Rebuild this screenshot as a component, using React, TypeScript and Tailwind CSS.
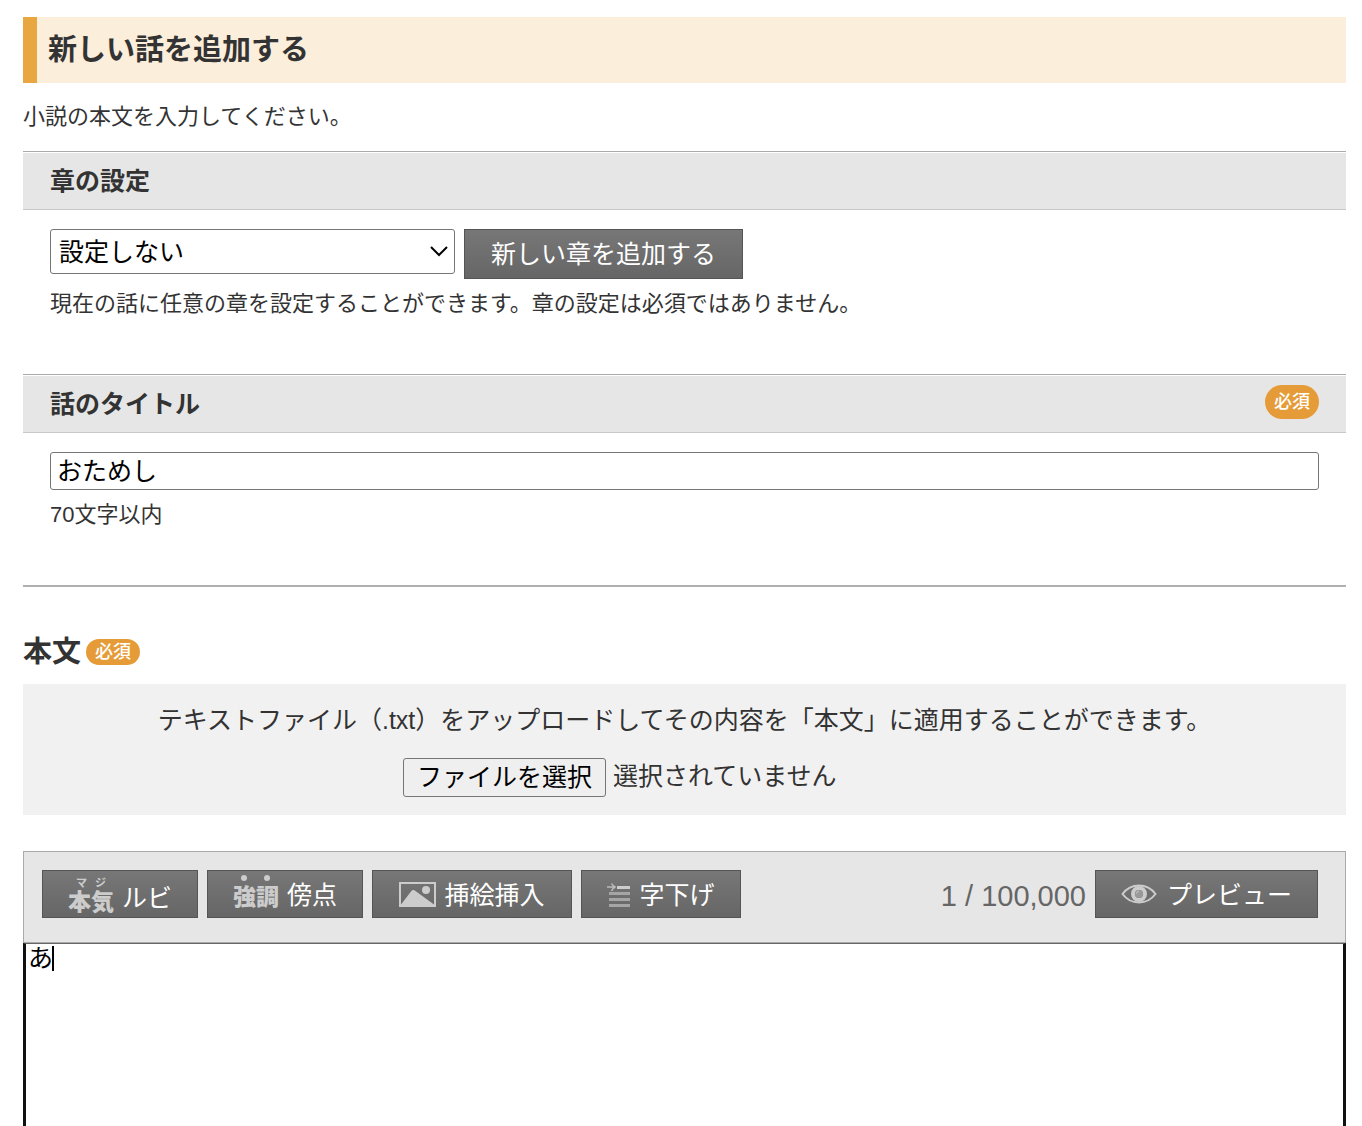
import React, { useState } from "react";

function SectionHeading({ htmlFor, children, required }: { htmlFor: string; children: React.ReactNode; required?: boolean }) {
  return (
    <div className="border-t border-[#aaaaaa] pt-px">
      <h2 className="flex h-[57px] items-center justify-between border-b border-[#c8c8c8] bg-[#e6e6e6] px-[27px] text-[25px] leading-9 font-bold">
        <label htmlFor={htmlFor}>{children}</label>
        {required && (
          <span className="mb-1 rounded-full bg-[#e59c38] px-[9px] text-lg leading-[34px] font-medium text-white">必須</span>
        )}
      </h2>
    </div>
  );
}

function ToolButton({ children, className = "" }: { children: React.ReactNode; className?: string }) {
  return (
    <button
      type="button"
      className={`flex h-12 shrink-0 items-center justify-center border border-[#555555] bg-linear-to-b from-[#777777] to-[#666666] text-[25px] leading-9 whitespace-nowrap text-white ${className}`}
    >
      {children}
    </button>
  );
}

function PictureIcon() {
  return (
    <svg className="mt-px h-[25px] w-[37px]" viewBox="0 0 37 25" fill="none" aria-hidden="true">
      <rect x="1" y="1" width="35" height="23" stroke="#cccccc" strokeWidth="2" />
      <path d="M2 22.500 12 9.500Q14 7 16.500 9L35 22.500V24H2z" fill="#cccccc" />
      <circle cx="27" cy="8" r="4" fill="#cccccc" />
    </svg>
  );
}

function IndentIcon() {
  return (
    <svg className="mt-px h-6 w-6" viewBox="0 0 24 24" fill="none" aria-hidden="true">
      <path d="M0 4h7M4.500 0.500c1 2 2 3 4 3.500-2 .5-3 1.500-4 4" stroke="#bbbbbb" strokeWidth="1.500" />
      <path d="M10 4.500h13" stroke="#cccccc" strokeWidth="3" />
      <path d="M2 10.500h21M2 16.500h21M2 22.500h21" stroke="#a5a5a5" strokeWidth="3" />
    </svg>
  );
}

function EyeIcon() {
  return (
    <svg className="h-5 w-9" viewBox="0 0 36 20" fill="none" aria-hidden="true">
      <path d="M1.500 10C6 4 11.500 1.500 18 1.500S30 4 34.500 10C30 16 24.500 18.500 18 18.500S6 16 1.500 10z" stroke="#cccccc" strokeWidth="2" />
      <circle cx="18" cy="10" r="6" stroke="#cccccc" strokeWidth="4" />
      <circle cx="18" cy="10" r="4" fill="#999999" />
      <path d="M15.500 9.500a3 3 0 0 1 2.500-2.500" stroke="#cccccc" strokeWidth="1" />
    </svg>
  );
}

export default function App() {
  const [title, setTitle] = useState("おためし");
  const [body, setBody] = useState("あ");

  return (
    <main className="flex h-screen flex-col overflow-hidden bg-white pt-[17px] pr-4 pl-[23px] font-['Liberation_Sans','Noto_Sans_CJK_JP',sans-serif] text-[#333333]">
      <h1 className="h-[66px] shrink-0 border-l-14 border-[#e9a742] bg-[#fbeedb] pl-[11px] text-[29px] leading-[66px] font-bold">
        新しい話を追加する
      </h1>
      <p className="mt-4 text-[22px] leading-9">小説の本文を入力してください。</p>

      <section className="mt-4">
        <SectionHeading htmlFor="chapter">章の設定</SectionHeading>
        <div className="px-[27px] pt-[19px]">
          <div className="flex items-start gap-[9px]">
            <div className="relative w-[405px]">
              <select
                id="chapter"
                className="block h-[45px] w-full appearance-none rounded-[3px] border border-[#767676] bg-white px-2 text-[25px] leading-9 text-black"
              >
                <option>設定しない</option>
              </select>
              <svg className="pointer-events-none absolute top-4 right-1.5 h-3 w-5" viewBox="0 0 20 12" fill="none" aria-hidden="true">
                <path d="m2 2 8 8 8-8" stroke="#000000" strokeWidth="2" />
              </svg>
            </div>
            <button
              type="button"
              className="h-[50px] border border-[#555555] bg-linear-to-b from-[#777777] to-[#666666] px-[26px] text-[25px] leading-9 text-white"
            >
              新しい章を追加する
            </button>
          </div>
          <p className="mt-[7px] text-[22px] leading-9">現在の話に任意の章を設定することができます。章の設定は必須ではありません。</p>
        </div>
      </section>

      <section className="mt-[52px] border-b-2 border-[#b0b0b0] pb-[52px]">
        <SectionHeading htmlFor="title" required>
          話のタイトル
        </SectionHeading>
        <div className="px-[27px] pt-[19px]">
          <input
            id="title"
            type="text"
            value={title}
            onChange={(e) => setTitle(e.target.value)}
            className="block h-[38px] w-full rounded-[3px] border border-[#767676] bg-white px-1.5 pb-1 text-[25px] text-black"
          />
          <p className="mt-[7px] text-[22px] leading-9">70文字以内</p>
        </div>
      </section>

      <div className="mt-[46px] flex items-center gap-[5px]">
        <h2 className="text-[29px] leading-[38px] font-bold">
          <label htmlFor="body">本文</label>
        </h2>
        <span className="rounded-full bg-[#e59c38] px-[9px] text-lg leading-[26px] font-medium text-white">必須</span>
      </div>

      <div className="mt-[13px] flex h-[131px] shrink-0 flex-col items-center bg-[#f1f1f1] pt-[18px] text-[25px] leading-9">
        <p>テキストファイル（.txt）をアップロードしてその内容を「本文」に適用することができます。</p>
        <label className="mt-5 flex w-[563px] cursor-pointer items-start gap-[7px]">
          <input type="file" accept=".txt" className="sr-only" />
          <span className="h-[39px] rounded-[3px] border border-[#767676] bg-[#efefef] px-[13px] text-black">ファイルを選択</span>
          <span>選択されていません</span>
        </label>
      </div>

      <div className="mt-9 flex h-[92px] shrink-0 items-start gap-[9px] border border-[#aaaaaa] bg-[#e6e6e6] pt-[18px] pr-[27px] pl-[18px]">
        <ToolButton className="w-[156px] gap-2">
          <span className="flex flex-col items-center pt-1 font-black text-[#cccccc]">
            <span className="flex gap-2 text-[11px] leading-3 font-bold">
              <span>マ</span>
              <span>ジ</span>
            </span>
            <span className="text-[23px] leading-[26px]">本気</span>
          </span>
          <span className="pt-2">ルビ</span>
        </ToolButton>
        <ToolButton className="w-[156px] gap-2">
          <span className="flex flex-col items-center font-black text-[#cccccc]">
            <span className="flex gap-[17px]">
              <span className="size-1.5 rounded-full bg-[#cccccc]" />
              <span className="size-1.5 rounded-full bg-[#cccccc]" />
            </span>
            <span className="text-[23px] leading-8">強調</span>
          </span>
          <span className="pt-0.5">傍点</span>
        </ToolButton>
        <ToolButton className="w-[200px] gap-2">
          <PictureIcon />
          <span className="pt-0.5">挿絵挿入</span>
        </ToolButton>
        <ToolButton className="w-40 gap-2">
          <IndentIcon />
          <span className="pt-0.5">字下げ</span>
        </ToolButton>
        <output htmlFor="body" className="ml-auto pt-1 text-[29px] leading-[44px] whitespace-nowrap text-[#666666]">
          {body.length} / 100,000
        </output>
        <ToolButton className="w-[223px] gap-2.5">
          <EyeIcon />
          <span className="pt-0.5">プレビュー</span>
        </ToolButton>
      </div>

      <div className="relative min-h-40 flex-1">
        <textarea
          id="body"
          value={body}
          onChange={(e) => setBody(e.target.value)}
          className="block h-full w-full resize-none border-x-3 border-t border-x-[#111111] border-t-[#666666] bg-white px-0.5 text-[25px] leading-7 text-black caret-transparent outline-none"
        />
        <span className="absolute top-[3px] left-[29px] h-[25px] w-0.5 bg-black" aria-hidden="true" />
      </div>
    </main>
  );
}
